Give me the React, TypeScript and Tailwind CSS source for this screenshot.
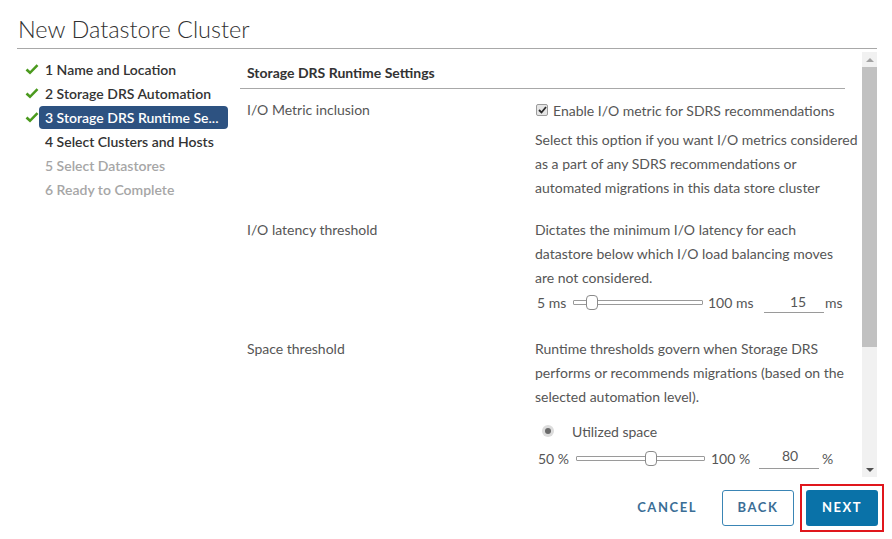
import React from 'react';

const FONT = { fontFamily: 'Lato, "Open Sans", sans-serif' };

const steps = [
  { label: '1 Name and Location', done: true },
  { label: '2 Storage DRS Automation', done: true },
  { label: '3 Storage DRS Runtime Se...', done: true, active: true },
  { label: '4 Select Clusters and Hosts' },
  { label: '5 Select Datastores', muted: true },
  { label: '6 Ready to Complete', muted: true },
];

const Check = () => (
  <svg width="14" height="12" viewBox="0 0 14 12" className="shrink-0">
    <path d="M1.5 6.5 L5 9.8 L12.5 2.2" fill="none" stroke="#4b9a1e" strokeWidth="2.6" />
  </svg>
);

const Slider = ({ width, pos }: { width: number; pos: number }) => (
  <div className="relative h-[16px] shrink-0" style={{ width }}>
    <div className="absolute left-0 right-0 top-[6px] h-[5px] border border-[#9a9a9a] rounded-[1px] bg-white" />
    <div
      className="absolute top-[1px] w-[12px] h-[15px] rounded-[4px] border border-[#8a8a8a] bg-white"
      style={{ left: pos }}
    />
  </div>
);

const Desc = ({ children }: { children: React.ReactNode }) => (
  <div className="text-[14px] leading-[24px] text-[#565656] whitespace-nowrap">{children}</div>
);

export default function App() {
  return (
    <div className="w-[892px] h-[539px] bg-white flex flex-col overflow-hidden" style={FONT}>
      {/* header */}
      <div className="pl-[17px] pr-[15px] pt-[14px]">
        <div className="text-[23.5px] leading-[30px] font-light text-[#313131] pl-[1px]">New Datastore Cluster</div>
        <div className="mt-[4px] border-b border-[#a8a8a8]" />
      </div>

      <div className="flex h-[428px]">
        {/* steps */}
        <div className="w-[240px] pl-[25px] pt-[8px] shrink-0">
          {steps.map((s) => (
            <div key={s.label} className="flex items-center h-[24px]">
              <div className="w-[14px]">{s.done && <Check />}</div>
              <div
                className={
                  s.active
                    ? 'h-[23px] w-[189px] rounded-[4px] bg-[#2d5281] text-white pl-[6px] flex items-center text-[14px] font-semibold whitespace-nowrap overflow-hidden'
                    : `ml-[6px] text-[14px] font-semibold whitespace-nowrap ${s.muted ? 'text-[#a6a6a6]' : 'text-[#333]'}`
                }
              >
                {s.label}
              </div>
            </div>
          ))}
        </div>

        {/* content */}
        <div className="flex flex-1 pt-[3px] pr-[15px]">
          <div className="w-[621px] overflow-hidden">
            <div className="mr-[16px] pl-[7px] pt-[11px] pb-[5px] border-b border-[#a8a8a8] text-[14px] leading-[20px] font-bold text-[#333]">
              Storage DRS Runtime Settings
            </div>

            {/* row 1 */}
            <div className="grid grid-cols-[288px_1fr] pl-[7px] mt-[9px]">
              <div className="text-[14px] leading-[24px] text-[#565656]">I/O Metric inclusion</div>
              <div>
                <div className="flex items-center h-[24px]">
                  <div className="w-[12px] h-[12px] ml-[1px] rounded-[2px] border border-[#9b9b9b] bg-[#e6e6e6] flex items-center justify-center">
                    <svg width="9" height="8" viewBox="0 0 9 8">
                      <path d="M1 4 L3.5 6.5 L8 1" fill="none" stroke="#2b2b2b" strokeWidth="1.8" />
                    </svg>
                  </div>
                  <span className="ml-[5px] text-[14px] text-[#565656] whitespace-nowrap">Enable I/O metric for SDRS recommendations</span>
                </div>
                <div className="mt-[6px]">
                  <Desc>Select this option if you want I/O metrics considered</Desc>
                  <Desc>as a part of any SDRS recommendations or</Desc>
                  <Desc>automated migrations in this data store cluster</Desc>
                </div>
              </div>
            </div>

            {/* row 2 */}
            <div className="grid grid-cols-[288px_1fr] pl-[7px] mt-[18px]">
              <div className="text-[14px] leading-[24px] text-[#565656]">I/O latency threshold</div>
              <div>
                <Desc>Dictates the minimum I/O latency for each</Desc>
                <Desc>datastore below which I/O load balancing moves</Desc>
                <Desc>are not considered.</Desc>
                <div className="flex items-center h-[24px] text-[14px] text-[#565656] whitespace-nowrap">
                  <span className="ml-[2px] w-[36px]">5 ms</span>
                  <Slider width={130} pos={13} />
                  <span className="ml-[5px] w-[56px]">100 ms</span>
                  <div className="w-[60px] h-[22px] border-b border-[#9a9a9a] text-center leading-[22px] pl-[8px]">15</div>
                  <span className="ml-[1px]">ms</span>
                </div>
              </div>
            </div>

            {/* row 3 */}
            <div className="grid grid-cols-[288px_1fr] pl-[7px] mt-[23px]">
              <div className="text-[14px] leading-[24px] text-[#565656]">Space threshold</div>
              <div>
                <Desc>Runtime thresholds govern when Storage DRS</Desc>
                <Desc>performs or recommends migrations (based on the</Desc>
                <Desc>selected automation level).</Desc>
                <div className="flex items-center h-[24px] mt-[10px] text-[14px] text-[#565656]">
                  <div className="ml-[7px] w-[12px] h-[12px] rounded-full bg-[#dcdcdc] flex items-center justify-center">
                    <div className="w-[6px] h-[6px] rounded-full bg-[#6a6a6a]" />
                  </div>
                  <span className="ml-[18px]">Utilized space</span>
                </div>
                <div className="flex items-center h-[24px] mt-[3px] text-[14px] text-[#565656] whitespace-nowrap">
                  <span className="ml-[3px] w-[38px]">50 %</span>
                  <Slider width={129} pos={69} />
                  <span className="ml-[6px] w-[48px]">100 %</span>
                  <div className="w-[60px] h-[22px] border-b border-[#9a9a9a] text-center leading-[18px] pl-[2px]">80</div>
                  <span className="ml-[3px]">%</span>
                </div>
              </div>
            </div>
          </div>

          {/* scrollbar */}
          <div className="ml-[1px] w-[15px] bg-[#f1f1f1] flex flex-col items-center">
            <div className="h-[15px] flex items-center justify-center">
              <div className="w-0 h-0 border-l-[4px] border-r-[4px] border-b-[4px] border-l-transparent border-r-transparent border-b-[#a3a3a3]" />
            </div>
            <div className="w-[15px] h-[280px] bg-[#c1c1c1]" />
            <div className="flex-1" />
            <div className="h-[15px] flex items-center justify-center">
              <div className="w-0 h-0 border-l-[4px] border-r-[4px] border-t-[4px] border-l-transparent border-r-transparent border-t-[#505050]" />
            </div>
          </div>
        </div>
      </div>

      {/* footer */}
      <div className="flex items-center justify-end pr-[8px] pt-[7px]">
        <button className="h-[36px] px-[12px] mr-[13px] text-[13px] font-bold tracking-[0.12em] text-[#3b6e96]">CANCEL</button>
        <button className="h-[36px] w-[72px] mr-[6px] rounded-[3px] border border-[#3a85b5] text-[13px] font-bold tracking-[0.12em] text-[#3b6e96]">BACK</button>
        <div className="p-[4px] border-2 border-[#e0161c]">
          <button className="h-[36px] w-[72px] rounded-[3px] bg-[#0a72a8] text-white text-[13px] font-bold tracking-[0.12em]">NEXT</button>
        </div>
      </div>
    </div>
  );
}
